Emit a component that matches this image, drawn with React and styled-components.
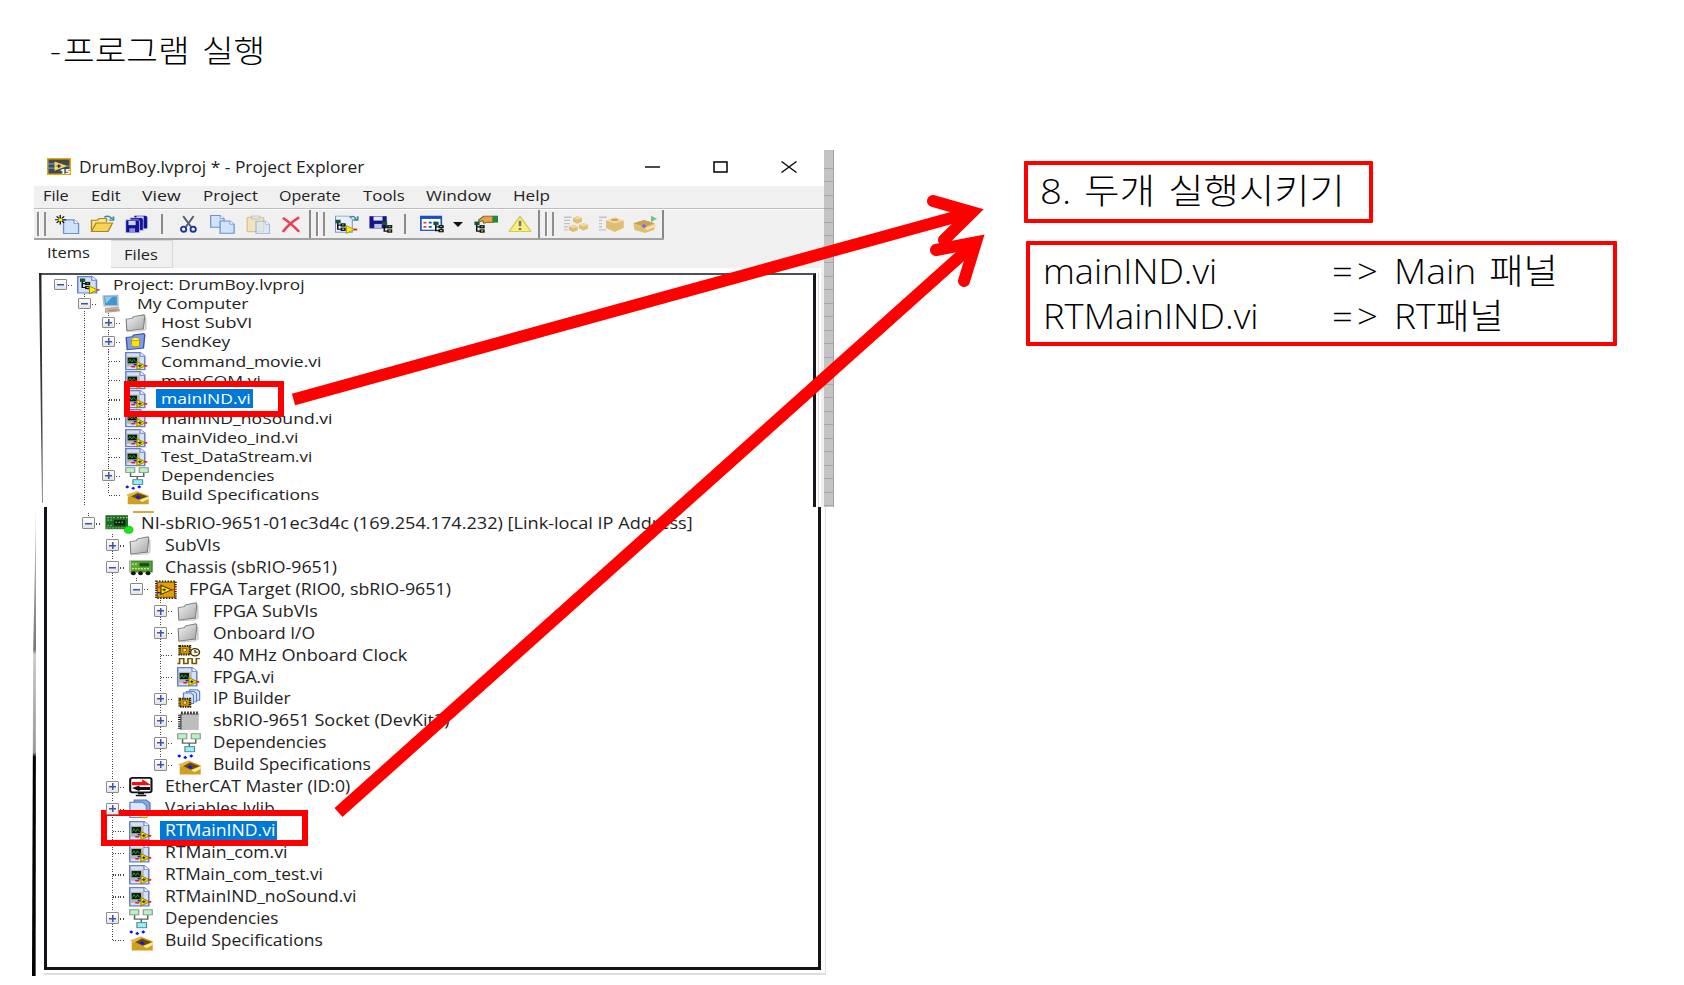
import React, { useLayoutEffect, useRef, useState } from "react";
import styled, { createGlobalStyle, css } from "styled-components";

const GlobalStyle = createGlobalStyle`
  * { box-sizing: border-box; }
  html, body { margin: 0; padding: 0; background: #fff; }
  body { overflow: hidden; }
`;

const uiFont = `"Open Sans", "Noto Sans", "Noto Sans CJK KR", sans-serif`;
const noteFont = `"Open Sans", "Noto Sans CJK KR", sans-serif`;
const red = "#ff0000";

/* ---------- text that is stretched to a set width ---------- */

const FitBox = styled.span`
  display: block;
  flex: none;
  width: ${(p) => p.$w}px;
  white-space: pre;
`;
const FitInner = styled.span`
  display: inline-block;
  transform-origin: 0 50%;
`;

function Fit({ w, children }) {
  const ref = useRef(null);
  const [scale, setScale] = useState(1);
  useLayoutEffect(() => {
    setScale(w / ref.current.offsetWidth);
  }, [w, children]);
  return (
    <FitBox $w={w}>
      <FitInner ref={ref} style={{ transform: `scaleX(${scale})` }}>
        {children}
      </FitInner>
    </FitBox>
  );
}

/* ---------- icons ---------- */

const IconSvg = styled.svg`
  display: block;
  flex: none;
  overflow: visible;
  width: ${(p) => p.$w}px;
  height: ${(p) => p.$h}px;
`;

const Page = ({ x = 0, y = 0 }) => (
  <>
    <path d={`M${x + 0.5} ${y + 0.5}h7l3 3v8.5h-10z`} fill="#cfe3fb" stroke="#6f8fd0" strokeWidth=".9" />
    <path d={`M${x + 7.5} ${y + 0.5}v3h3`} fill="#fff" stroke="#6f8fd0" strokeWidth=".7" />
  </>
);
const Hierarchy = ({ x = 0, y = 0 }) => (
  <>
    <path d={`M${x + 1.5} ${y + 2}v6h3M${x + 1.5} ${y + 4.5}h3`} fill="none" stroke="#111" />
    <rect x={x} y={y} width="3.4" height="3" fill="#153" />
    <rect x={x + 3.4} y={y + 3} width="3.4" height="2.8" fill="#111" />
    <rect x={x + 3.4} y={y + 6.6} width="3.4" height="2.8" fill="#111" />
    <rect x={x + 4.4} y={y + 3.8} width="1.4" height="1" fill="#3b6" />
    <rect x={x + 4.4} y={y + 7.4} width="1.4" height="1" fill="#dd3" />
  </>
);

const icons = {
  vi: (
    <>
      <path d="M.5.5h9.7l3 3.2v11.8H.5z" fill="#d5e1f8" stroke="#6a7fc8" />
      <path d="M10 .5v3.3h3.2" fill="#fff" stroke="#6a7fc8" strokeWidth=".8" />
      <rect x="1.2" y="4" width="8.6" height="9" fill="#b4b4b4" />
      <rect x="1.8" y="5" width="6.2" height="5" fill="#061a06" />
      <path d="M2.2 8.8l1.1-2.4 1.2 2.4 1.2-2.4 1.3 2.2" fill="none" stroke="#38b838" strokeWidth=".6" />
      <path d="M4.2 13h2.6" stroke="#e02020" strokeWidth="1.3" />
      <path d="M5.8 11.2h2.4" stroke="#2020e0" strokeWidth="1.3" />
      <path d="M8 8.800l5.600 3.400L8 15.600z" fill="#ffee00" stroke="#9a8600" strokeWidth=".8" />
      <path d="M8.700 12.200h2.400M9.900 11v2.400" stroke="#222" strokeWidth=".8" />
      <path d="M12.900 12.200h1.900" stroke="#e02020" strokeWidth="1.500" />
    </>
  ),
  project: (
    <>
      <path d="M.5.5h9.500l3 3.200v11.300H.5z" fill="#d5e1f8" stroke="#6a7fc8" />
      <path d="M9.800.5v3.300H13" fill="#fff" stroke="#6a7fc8" strokeWidth=".8" />
      <Hierarchy x={2} y={2.200} />
      <path d="M8.300 9l5.400 3.300-5.400 3.300z" fill="#ffee00" stroke="#9a8600" strokeWidth=".7" />
      <path d="M13.200 12.300h1.800" stroke="#e02020" strokeWidth="1.300" />
    </>
  ),
  computer: (
    <>
      <path d="M1.500 .8l9.500-.3.300 9H2.200z" fill="#3f97cf" stroke="#b5bcc4" strokeWidth="1.200" />
      <path d="M2.600 1.800l5-.2-4.300 6z" fill="#8ccdf0" />
      <path d="M3 11.800l8.500-.8 1 3-9.500 1.300z" fill="#c9b9a2" stroke="#8a94a5" strokeWidth=".6" />
      <path d="M5 13.800l6-.7" stroke="#e07a3a" />
    </>
  ),
  folder: (
    <>
      <path d="M1.300 15.300l10.500-.6 2-1.400V3" fill="none" stroke="#aaa" strokeWidth="1.200" opacity=".6" />
      <path d="M.8 4.600L4.800 3.800l1-1.500 6.800-1.600.6 1.200-.9 11.300L1.200 14.900z" fill="url(#folderGrey)" stroke="#777" strokeWidth=".7" />
    </>
  ),
  keyFolder: (
    <>
      <path d="M.8 4L4.800 3.200l1-1.500 6.800-1.100.6 1.200-.9 11.400L1.500 14.800z" fill="#7d9df0" stroke="#3a4fae" strokeWidth=".9" />
      <path d="M4.300 5.500v5c0 2.200 5.400 2.200 5.400 0v-5z" fill="#ffe400" stroke="#a08800" strokeWidth=".6" />
      <ellipse cx="7" cy="5.400" rx="2.700" ry="1.300" fill="#fff9a0" stroke="#a08800" strokeWidth=".6" />
    </>
  ),
  deps: (
    <>
      <path d="M3.700 5v3.400h8.800V5M8.200 8.400v3" fill="none" stroke="#5c6666" />
      <rect x=".5" y=".6" width="6" height="4.200" fill="#b9f3c4" stroke="#889a90" strokeWidth=".8" />
      <rect x="9.500" y=".6" width="6" height="4.200" fill="#b9f3c4" stroke="#889a90" strokeWidth=".8" />
      <rect x="5.300" y="11.200" width="6.400" height="4.200" fill="#8ef2f7" stroke="#5c8a90" strokeWidth=".8" />
    </>
  ),
  build: (
    <>
      <path d="M1.800 9.500V16H15.800V8.500L8.500 5z" fill="#cf9f22" />
      <path d="M3.500 8.800l5-2.600 6.500 3-5.500 3z" fill="#6b4a08" />
      <path d="M.6 7.800L8 4.400l1.500 1L3.200 9.800z" fill="#e3b844" />
      <path d="M9.500 12.400l6.300-3.200v2.300l-4.300 2.600z" fill="#fbe9a0" />
      <path d="M8.700 8.200l1.700 1.700-1.700 1.700L7 9.900z" fill="#1414f0" />
      <path d="M1.500-.6L2.900.8 1.500 2.200.1.800zM5.500.6l1.400 1.400-1.400 1.400L4.100 2zM9.500-.6L10.900.8 9.500 2.200 8.100.8z" fill="#1414f0" />
    </>
  ),
  rio: (
    <>
      <rect x=".3" y="1" width="15" height="11.500" fill="#1f6b22" />
      <path d="M1.500 3h5M1.500 5h4M1.500 9.500h4M1 11.500h14" stroke="#73b873" strokeDasharray="1.200 .7" />
      <path d="M6 5h7.500v4.500H6z" fill="#0a2a0a" />
      <path d="M7 6.800h6M8 3h7" stroke="#9ad39a" strokeDasharray="1 1" />
      <circle cx="15.800" cy="13" r="2.900" fill="#10f010" stroke="#0aa50a" strokeWidth=".5" />
    </>
  ),
  chassis: (
    <>
      <rect x=".6" y="2.500" width="14.800" height="9" fill="#58a832" stroke="#356b20" strokeWidth=".7" />
      <path d="M.8 2v9.500" stroke="#b9c0b0" strokeWidth="1.200" />
      <rect x="7" y="4" width="6.500" height="3" fill="#1e4f16" />
      <path d="M2 5h4M2 8.800h12" stroke="#c7ef9a" strokeDasharray="1.200 .8" />
      <circle cx="2.900" cy="12.600" r="1.600" fill="#111" />
      <circle cx="7.700" cy="12.600" r="1.600" fill="#111" />
      <circle cx="12.700" cy="12.600" r="1.600" fill="#111" />
    </>
  ),
  fpga: (
    <g transform="translate(1 0)">
      <rect x="1.100" y="1.100" width="13" height="13.800" fill="none" stroke="#2b1d00" strokeWidth="1.400" strokeDasharray="1 .9" />
      <rect x="1.800" y="1.800" width="11.600" height="12.400" fill="#e0a000" stroke="#5c4000" strokeWidth=".7" />
      <path d="M4.300 4.300l7 3.800-7 3.800z" fill="#ffee00" stroke="#443300" strokeWidth=".8" />
      <path d="M1.300 5.800h3M11.500 8.100h2.500" stroke="#e02020" />
      <path d="M1.300 10.400h3" stroke="#2020e0" />
      <path d="M5.200 8.100h2.400M6.400 7v2.200" stroke="#222" strokeWidth=".8" />
    </g>
  ),
  clock: (
    <>
      <rect x="1.700" y=".8" width="7" height="7" fill="#d59a00" stroke="#2b1d00" strokeWidth="1.600" strokeDasharray="1 .6" />
      <rect x="4" y="3" width="2.200" height="2.400" fill="#ffe680" stroke="#6b4a08" strokeWidth=".5" />
      <circle cx="12" cy="6" r="3" fill="#fff6d0" stroke="#3a3320" />
      <path d="M12 4.200V6h1.600" fill="none" stroke="#222" strokeWidth=".8" />
      <path d="M.3 15.200h1.400v-4h2.800v4h2.800v-4h2.800v4h2.800v-4h2.300" fill="none" stroke="#7a5200" strokeWidth="1.100" />
    </>
  ),
  ip: (
    <>
      <path d="M8.500.7h5l1.600 1.600v7H8.500z" fill="#d8e6fb" stroke="#5f7fc8" strokeWidth=".8" />
      <path d="M6.300 2h5L13 3.600v7H6.300z" fill="#d8e6fb" stroke="#5f7fc8" strokeWidth=".8" />
      <path d="M4.300 3.300h5L11 5v7H4.300z" fill="#d8e6fb" stroke="#5f7fc8" strokeWidth=".8" />
      <rect x="1.700" y="8" width="7" height="6.600" fill="#d59a00" stroke="#2b1d00" strokeWidth="1.600" strokeDasharray="1 .6" />
      <rect x="4.100" y="10" width="2.400" height="2.400" fill="#ffe680" stroke="#6b4a08" strokeWidth=".5" />
    </>
  ),
  socket: (
    <>
      <rect x="2.500" y="2.800" width="12" height="12.800" fill="#bdbdbd" />
      <path d="M2.800 1.400H14.600" stroke="#111" strokeWidth="2" strokeDasharray="1 1" />
      <path d="M1.600 3v12.500" stroke="#111" strokeWidth="1.800" strokeDasharray=".9 .9" />
      <path d="M2.600 15.500V2.600h12" fill="none" stroke="#333" strokeWidth=".7" />
    </>
  ),
  ethercat: (
    <>
      <rect x=".8" y=".8" width="14.200" height="11.800" rx="1.400" fill="#fff" stroke="#111" strokeWidth="1.400" />
      <path d="M4.500 15.200h7M6 13.600h4" stroke="#111" strokeWidth="1.300" />
      <path d="M2 4.200h6.800V1.900l5.400 4.200v.7H2z" fill="#f01010" />
      <path d="M14 8.200H7V6.900L2 9l5 2.800v-1.200h7z" fill="#111" />
    </>
  ),
  lib: (
    <>
      <path d="M3.500.8h8l2.500 2.500v10H3.500z" fill="#87a8e0" stroke="#5274bd" strokeWidth=".8" />
      <path d="M.6 2.800h8.500l2.500 2.600v9.800H.6z" fill="#d9e8fc" stroke="#6a8bd2" strokeWidth=".9" />
      <ellipse cx="10" cy="13.200" rx="3" ry="2.200" fill="#ffe65a" stroke="#b59b10" strokeWidth=".6" />
    </>
  ),
  labview: (
    <>
      <rect x="0" y="0" width="16" height="16" fill="#eba900" />
      <rect x="1" y="1.400" width="14" height="13.200" fill="#44484e" />
      <path d="M0 5.500h5M0 9.500h5M13 7.500h3" stroke="#5aa3dd" />
      <path d="M5 3.200l8.600 4.400L5 12z" fill="#f4d56c" />
      <path d="M6.400 7.600h3M7.900 6v3.200" stroke="#222" />
      <text x="8.600" y="14.600" fontFamily="Open Sans" fontWeight="800" fontSize="6" fill="#fff">15</text>
    </>
  ),
  newFile: (
    <>
      <g transform="translate(5.200 3.600)"><Page /></g>
      <path d="M3.500 0v8M0 4h7.500M1.100 1.200l5 5.400M6.100 1.200l-5 5.400" stroke="#111" strokeWidth=".9" />
      <rect x="2.400" y="2.800" width="2.400" height="2.400" fill="#ffee00" />
    </>
  ),
  open: (
    <>
      <path d="M1 14V4.600h4l1-1.400h5v3" fill="#fbe58a" stroke="#a8861c" strokeWidth=".9" />
      <path d="M1 14.600l3-7.400h11l-3 7.400z" fill="#f7d355" stroke="#a8861c" strokeWidth=".9" />
      <path d="M9.500 2c2-1.500 4-1 5 1.600M15.600 1.400v3.200h-3" fill="none" stroke="#2f8f9a" strokeWidth="1.200" />
    </>
  ),
  saveAll: (
    <>
      <path d="M6.500 .6h7.700l1.300 1v10.500h-9z" fill="#12129a" />
      <path d="M8 1.100h5v3H8z" fill="#cfd8f8" />
      <path d="M3.500 2.400h8.200l1 1v10.300H3.500z" fill="#12129a" stroke="#dfe4ff" strokeWidth=".5" />
      <path d="M.5 4.300h8.600l1 1v10.500H.5z" fill="#12129a" stroke="#dfe4ff" strokeWidth=".5" />
      <path d="M2.400 5.200h5v3.800h-5z" fill="#cfd8f8" />
      <path d="M3 11.800h4v3.700H3z" fill="#8c94d8" />
    </>
  ),
  cut: (
    <>
      <path d="M3 1l7.400 9.600M12.800 1L5.500 10.600" stroke="#56606c" strokeWidth="1.800" />
      <ellipse cx="3.400" cy="12.600" rx="2.500" ry="2.300" fill="none" stroke="#17349a" strokeWidth="1.700" />
      <ellipse cx="12.400" cy="12.600" rx="2.500" ry="2.300" fill="none" stroke="#17349a" strokeWidth="1.700" />
    </>
  ),
  copy: (
    <>
      <g transform="translate(0 0) scale(.86)"><Page /></g>
      <g transform="translate(6 4.600) scale(.9)"><Page /></g>
    </>
  ),
  paste: (
    <g opacity=".75">
      <rect x=".8" y="2" width="11" height="12" rx="1" fill="#f0e3ac" stroke="#cbb96e" strokeWidth=".9" />
      <rect x="3.600" y=".8" width="5.400" height="2.600" fill="#dcdcdc" stroke="#aaa" strokeWidth=".5" />
      <g transform="translate(6.200 4.800) scale(.9)" opacity=".7"><Page /></g>
    </g>
  ),
  del: <path d="M1.500 1.800c4 3 8.500 7.600 13 13M14.500 1.200C10 4.600 4.800 9.500 1.500 15" fill="none" stroke="#e8405a" strokeWidth="2.200" />,
  projOpen: (
    <>
      <path d="M1 1h9l2.200 2.400V14.500H1z" fill="#e9f0fc" stroke="#7d95cc" strokeWidth=".7" />
      <Hierarchy x={1} y={4} />
      <path d="M8.300 9l5.200 3.200-5.200 3.300z" fill="#ffee00" stroke="#9a8600" strokeWidth=".6" />
      <path d="M13 12.200h2.500" stroke="#e02020" strokeWidth="1.500" />
      <path d="M10.500 2c2-1.500 3.500-.8 4 1.600M15.800 1v3.200h-3" fill="none" stroke="#2f8f9a" strokeWidth="1.200" />
    </>
  ),
  projSave: (
    <>
      <path d="M.3 1h11.500v10.300H.3z" fill="#14148a" />
      <path d="M3 1.300h6v3.400H3z" fill="#e4e9fc" />
      <path d="M3.500 7.500h5V11h-5z" fill="#b9c0f0" />
      <Hierarchy x={8.700} y={5.500} />
    </>
  ),
  grid: (
    <>
      <rect x=".6" y="1.200" width="13.600" height="12.400" fill="#fff" stroke="#1a4fc4" strokeWidth="1.100" />
      <path d="M.3 2.200h14.200" stroke="#1a4fc4" strokeWidth="2.600" />
      <path d="M2.300 6.700h2M2.300 10.500h2" stroke="#e04030" strokeWidth="1.600" />
      <path d="M5.800 6.700h2M9 6.700h2M5.800 10.500h2" stroke="#1a4fc4" strokeWidth="1.600" />
      <Hierarchy x={9} y={6} />
    </>
  ),
  hand: (
    <>
      <Hierarchy x={0.3} y={5.5} />
      <path d="M3 4.200L6.500 1h6.200v5.200L9.500 6l-3 1-.6-2-2.500.5z" fill="#e0a44a" stroke="#7a4c10" strokeWidth=".7" />
      <rect x="12.500" y=".6" width="3.500" height="5.800" fill="#1f8a3a" />
    </>
  ),
  warn: (
    <>
      <path d="M8 1.200L15.300 14.700H.7z" fill="#f9ef7e" stroke="#d8c850" strokeLinejoin="round" />
      <path d="M8 5v5M8 11.500v1.800" stroke="#77787c" strokeWidth="1.700" />
    </>
  ),
  cubes: (
    <>
      <path d="M0 2h5M0 4.800h4M0 7.600h4M0 10.400h2.500M0 13.200h2.500" stroke="#c2c2c2" strokeWidth="1.200" />
      <path d="M6 2.600l3-1.700 3 1.700V6L9 7.700 6 6zM3.200 10.300l3-1.700 3 1.700v3.200l-3 1.700-3-1.700zM10 8.800l3-1.700 3 1.700V12l-3 1.700L10 12z" fill="#dfbd72" />
      <path d="M6 2.600l3 1.500 3-1.500L9 .9zM3.200 10.300l3 1.500 3-1.500-3-1.700zM10 8.800l3 1.500 3-1.500-3-1.700z" fill="#efd9a4" />
    </>
  ),
  package: (
    <>
      <path d="M0 2h5M0 4.800h2M0 7.600h2M0 10.400h2M0 13.200h4.500" stroke="#c2c2c2" strokeWidth="1.200" />
      <path d="M4.500 5L10 2.200 15.800 5v6.500L10 15l-5.500-3.500z" fill="#dfbd72" />
      <path d="M4.500 5L10 7.600 15.800 5 10 2.200z" fill="#efd9a0" />
      <path d="M8 3.400h4v1.800H8z" fill="#c9a04e" />
    </>
  ),
  deploy: (
    <>
      <path d="M.3 7l7-2.800 7 2.800v5.500L8 15.200l-7-2.500z" fill="#e0bf72" />
      <path d="M.3 7l7-2.800 7 2.800L8 9.800z" fill="#c79f55" />
      <path d="M8 11l7.500-3.500v2L9.500 12.600z" fill="#f5e3b4" />
      <path d="M7.300 7.600l1.700 1.800-1.700 1.800-1.700-1.800z" fill="#6f6fe8" />
      <path d="M12 .6l4 2.500-4 2.700z" fill="#6fc486" />
    </>
  ),
};

const Icon = ({ name, w, h }) => (
  <IconSvg viewBox="0 0 16 16" preserveAspectRatio="none" $w={w} $h={h}>
    {icons[name]}
  </IconSvg>
);

const Defs = styled.svg`
  position: absolute;
  width: 0;
  height: 0;
`;

/* ---------- slide ---------- */

const Slide = styled.main`
  position: relative;
  width: 1684px;
  height: 985px;
  overflow: hidden;
  background: #fff;
  color: #000;
`;
const SlideHeader = styled.header`
  height: 150px;
  padding: 27px 0 0 50px;
`;
const SlideTitle = styled.h1`
  display: flex;
  gap: 2px;
  margin: 0;
  font: 300 31px/46px ${noteFont};
  word-spacing: 3px;
`;
const SlideBody = styled.div`
  display: flex;
  align-items: flex-start;
`;
const Shots = styled.section`
  width: 802px;
  margin-left: 32px;
`;

/* ---------- explorer window ---------- */

const WindowRow = styled.div`
  display: flex;
  height: 357px;
  margin-left: 2px;
`;
const Explorer = styled.div`
  display: flex;
  flex-direction: column;
  width: 790px;
  font: 400 15px/20px ${uiFont};
  color: #222;
`;
const DesktopStrip = styled.div`
  width: 10px;
  border-right: 1px solid #a2a2a2;
  background: repeating-linear-gradient(#c4c4c4 0 12.5px, #a8a8a8 12.5px 13.5px);
  background-position-y: 5px;
`;
const TitleBar = styled.div`
  display: flex;
  align-items: center;
  height: 36px;
  padding: 0 27px 3px 13px;
  font-size: 15.5px;
`;
const TitleText = styled.div`
  margin-left: 8px;
  flex: 1;
`;
const Controls = styled.div`
  display: flex;
  align-items: center;
  gap: 53px;
`;
const MenuBar = styled.div`
  display: flex;
  align-items: center;
  gap: 21.5px;
  height: 22px;
  padding: 0 0 5px 9px;
  background: #f0f0f0;
  white-space: nowrap;
`;
const ToolArea = styled.div`
  height: 32px;
  border-top: 1px solid #bdbdbd;
  background: #f0f0f0;
  box-shadow: inset 0 1px #fff;
`;
const ToolStrip = styled.div`
  display: flex;
  align-items: center;
  width: 630px;
  height: 31px;
  padding: 1px 0 0 3px;
  border-bottom: 2px solid #a3a3a3;
`;
const Tool = styled.div`
  flex: none;
  margin-left: ${(p) => p.$gap}px;
`;
const Grip = styled.div`
  flex: none;
  width: 9px;
  height: 24px;
  margin-left: ${(p) => p.$gap || 0}px;
  border: solid #8e8e8e;
  border-width: 0 2px;
  background: linear-gradient(90deg, #fff 1px, #f0f0f0 1px);
`;
const Divider = styled.div`
  flex: none;
  width: 2px;
  height: ${(p) => (p.$full ? 28 : 20)}px;
  margin-left: ${(p) => p.$gap}px;
  background: #8a8a8a;
`;
const Caret = styled.div`
  margin-left: 9px;
  border: solid transparent;
  border-width: 5px 5px 0;
  border-top-color: #111;
`;
const Tabs = styled.div`
  display: flex;
  height: 28px;
  background: #f0f0f0;
`;
const Tab = styled.div`
  width: ${(p) => (p.$active ? 77 : 62)}px;
  padding: ${(p) => (p.$active ? "2px 0 0 13px" : "3px 0 0 13px")};
  background: ${(p) => (p.$active ? "#fff" : "#f0f0f0")};
  ${(p) => !p.$active && css`
    border: solid #d6d6d6;
    border-width: 1px 1px 1px 0;
  `}
`;
const TopPane = styled.div`
  display: flex;
  flex: 1;
  padding: 5px 2px 0 5px;
  border-right: 3px solid #efefef;
`;
const SkewedEdge = styled.div`
  width: 4px;
  height: 230px;
  background: linear-gradient(#222, #445 70%, #999);
  clip-path: polygon(0 0, 60% 0, 100% 100%, 75% 100%);
`;
const TopTree = styled.div`
  flex: 1;
  margin-left: -3px;
  padding-left: 8.5px;
  border: solid #14181d;
  border-width: 2.5px 3px 0 0;
  border-top-color: #4a5158;
`;
const PaneGap = styled.div`
  width: 3px;
  border-right: 1px solid #ddd;
`;

/* ---------- second capture ---------- */

const LowerRow = styled.div`
  display: flex;
  height: 470px;
  font: 400 16.2px/22px ${uiFont};
  color: #222;
`;
const OuterEdge = styled.div`
  width: 4px;
  height: 466px;
  margin: 3px 8px 0 0;
  background: linear-gradient(#ccc, #777 30%, #ccc 31%, #999 52%, #000 53%);
  clip-path: polygon(100% 0, 100% 30%, 90% 100%, 0 100%, 30% 30%);
`;
const LowerFrame = styled.div`
  width: 782px;
  height: 468px;
  border: solid #dedede;
  border-width: 0 1px 2px 0;
`;
const LowerTree = styled.div`
  width: 777px;
  height: 463px;
  padding-left: 29.5px;
  border: 3px solid #11151a;
  border-top: 0;
`;
const CutRow = styled.div`
  height: 5.5px;
  padding: 4px 0 0 56px;
`;
const CutIcon = styled.div`
  width: 21px;
  height: 1.5px;
  background: #d8a840;
`;

/* ---------- tree rows ---------- */

const Row = styled.div`
  display: flex;
  align-items: center;
  height: ${(p) => p.$h}px;
`;
const dots = (dir) => `repeating-linear-gradient(${dir}, #444 0 1px, transparent 1px 2.4px)`;
const Guide = styled.div`
  position: relative;
  display: flex;
  align-items: center;
  justify-content: center;
  flex: none;
  width: 24px;
  height: 100%;
  &::before {
    content: "";
    position: absolute;
    left: 11.5px;
    top: 0;
    bottom: ${(p) => (p.$to === "mid" ? "50%" : 0)};
    width: 1.3px;
    background: ${(p) => (p.$line ? dots("180deg") : "none")};
  }
  &::after {
    content: "";
    position: absolute;
    left: 12px;
    top: 50%;
    width: 11px;
    height: 1.2px;
    background: ${(p) => (p.$tee ? dots("90deg") : "none")};
  }
`;
const Expander = styled.div`
  position: relative;
  z-index: 1;
  width: 13px;
  height: ${(p) => p.$h}px;
  border: 1px solid #8b8b8b;
  border-radius: 1px;
  background:
    linear-gradient(#3c55a5, #3c55a5) center / 7px 1.5px no-repeat,
    linear-gradient(#3c55a5, #3c55a5) center / ${(p) => (p.$open ? "0 0" : "1.5px 7px")} no-repeat,
    linear-gradient(#fff, #e4e4e4);
`;
const IconCell = styled.div`
  flex: none;
  width: 40px;
  padding-left: 4.5px;
`;
const Label = styled.div`
  padding: 0 2px 0 ${(p) => (p.$selected ? 4.5 : 0)}px;
  margin: -1px 0 0 ${(p) => (p.$selected ? -4.5 : 0)}px;
  line-height: ${(p) => (p.$selected ? 19 : 18)}px;
  color: ${(p) => (p.$selected ? "#fff" : "#222")};
  background: ${(p) => (p.$selected ? "#0078d7" : "transparent")};
`;

function TreeRow({ h, guides = [], node, icon, text, w, selected, last, stub }) {
  return (
    <Row $h={h}>
      {guides.map((on, i) => <Guide key={i} $line={on} />)}
      <Guide $line={stub || node !== "root"} $to={stub || last ? "mid" : "end"} $tee>
        {node !== "leaf" && <Expander $h={h > 20 ? 12 : 11} $open={node !== "plus"} />}
      </Guide>
      <IconCell><Icon name={icon} w={24} h={h - (h > 20 ? 2.5 : 1)} /></IconCell>
      <Label $selected={selected}><Fit w={w}>{text}</Fit></Label>
    </Row>
  );
}

const g1 = [false];
const g2 = [false, true];
const upperRows = [
  { node: "root", icon: "project", text: "Project: DrumBoy.lvproj", w: 191 },
  { guides: g1, node: "minus", icon: "computer", text: "My Computer", w: 112 },
  { guides: g2, node: "plus", icon: "folder", text: "Host SubVI", w: 91 },
  { guides: g2, node: "plus", icon: "keyFolder", text: "SendKey", w: 69 },
  { guides: g2, node: "leaf", icon: "vi", text: "Command_movie.vi", w: 160 },
  { guides: g2, node: "leaf", icon: "vi", text: "mainCOM.vi", w: 100 },
  { guides: g2, node: "leaf", icon: "vi", text: "mainIND.vi", w: 90, selected: true },
  { guides: g2, node: "leaf", icon: "vi", text: "mainIND_noSound.vi", w: 171 },
  { guides: g2, node: "leaf", icon: "vi", text: "mainVideo_ind.vi", w: 138 },
  { guides: g2, node: "leaf", icon: "vi", text: "Test_DataStream.vi", w: 151 },
  { guides: g2, node: "plus", icon: "deps", text: "Dependencies", w: 113 },
  { guides: g2, node: "leaf", icon: "build", text: "Build Specifications", w: 158, last: true },
];

const l2 = [false];
const l4 = [false, true, false];
const lowerRows = [
  { node: "minus", stub: true, icon: "rio", text: "NI-sbRIO-9651-01ec3d4c (169.254.174.232) [Link-local IP Address]", w: 552 },
  { guides: l2, node: "plus", icon: "folder", text: "SubVIs", w: 56 },
  { guides: l2, node: "minus", icon: "chassis", text: "Chassis (sbRIO-9651)", w: 172 },
  { guides: [false, true], node: "minus", stub: true, icon: "fpga", text: "FPGA Target (RIO0, sbRIO-9651)", w: 262 },
  { guides: l4, node: "plus", icon: "folder", text: "FPGA SubVIs", w: 105 },
  { guides: l4, node: "plus", icon: "folder", text: "Onboard I/O", w: 102 },
  { guides: l4, node: "leaf", icon: "clock", text: "40 MHz Onboard Clock", w: 194 },
  { guides: l4, node: "leaf", icon: "vi", text: "FPGA.vi", w: 62 },
  { guides: l4, node: "plus", icon: "ip", text: "IP Builder", w: 78 },
  { guides: l4, node: "plus", icon: "socket", text: "sbRIO-9651 Socket (DevKit2)", w: 237 },
  { guides: l4, node: "plus", icon: "deps", text: "Dependencies", w: 113 },
  { guides: l4, node: "plus", icon: "build", text: "Build Specifications", w: 158, last: true },
  { guides: l2, node: "plus", icon: "ethercat", text: "EtherCAT Master (ID:0)", w: 185 },
  { guides: l2, node: "plus", icon: "lib", text: "Variables.lvlib", w: 110 },
  { guides: l2, node: "leaf", icon: "vi", text: "RTMainIND.vi", w: 110, selected: true },
  { guides: l2, node: "leaf", icon: "vi", text: "RTMain_com.vi", w: 122 },
  { guides: l2, node: "leaf", icon: "vi", text: "RTMain_com_test.vi", w: 158 },
  { guides: l2, node: "leaf", icon: "vi", text: "RTMainIND_noSound.vi", w: 191 },
  { guides: l2, node: "plus", icon: "deps", text: "Dependencies", w: 113 },
  { guides: l2, node: "leaf", icon: "build", text: "Build Specifications", w: 158, last: true },
];

const menus = [
  ["File", 26], ["Edit", 30], ["View", 39], ["Project", 55],
  ["Operate", 62], ["Tools", 41.5], ["Window", 65.5], ["Help", 36.5],
];

/* ---------- notes and annotations ---------- */

const Notes = styled.aside`
  display: flex;
  flex-direction: column;
  gap: 18px;
  margin: 11px 0 0 190px;
`;
const NoteBox = styled.div`
  width: ${(p) => p.$w}px;
  height: ${(p) => p.$h}px;
  margin-left: ${(p) => p.$indent || 0}px;
  padding: ${(p) => p.$pad};
  border: 4px solid ${red};
  border-radius: 1px;
  font: 300 35px/44.5px ${noteFont};
  word-spacing: 3px;
`;
const NoteLine = styled.div`
  display: grid;
  grid-template-columns: 289px 62px auto;
  height: 44.5px;
`;
const Becomes = styled.span`
  letter-spacing: 4px;
`;
const Highlight = styled.div`
  position: absolute;
  left: ${(p) => p.$x}px;
  top: ${(p) => p.$y}px;
  width: ${(p) => p.$w}px;
  height: ${(p) => p.$h}px;
  border: 6px solid ${red};
`;
const ArrowLayer = styled.svg`
  position: absolute;
  inset: 0;
  width: 1684px;
  height: 985px;
  fill: none;
  stroke: ${red};
  stroke-width: 12px;
  stroke-miterlimit: 8;
`;

function Arrow({ from, tip, a, b }) {
  return (
    <g>
      <path d={`M${from}L${tip}`} />
      <path d={`M${a}L${tip}L${b}`} strokeLinecap="round" />
    </g>
  );
}

export default function App() {
  return (
    <Slide>
      <GlobalStyle />
      <Defs aria-hidden="true">
        <linearGradient id="folderGrey" x1="0" y1="0" x2="1" y2="1">
          <stop offset="0" stopColor="#f4f4f4" />
          <stop offset="1" stopColor="#a4a4a4" />
        </linearGradient>
      </Defs>
      <SlideHeader>
        <SlideTitle><Fit w={11}>-</Fit><Fit w={202}>프로그램 실행</Fit></SlideTitle>
      </SlideHeader>
      <SlideBody>
        <Shots>
          <WindowRow>
            <Explorer>
              <TitleBar>
                <Icon name="labview" w={24} h={17} />
                <TitleText><Fit w={285}>DrumBoy.lvproj * - Project Explorer</Fit></TitleText>
                <Controls>
                  <svg width="15" height="12"><path d="M0 6h15" stroke="#111" strokeWidth="1.5" /></svg>
                  <svg width="15" height="12"><rect x="1" y="1" width="13" height="10" fill="none" stroke="#111" strokeWidth="1.6" /></svg>
                  <svg width="16" height="12"><path d="M.5.5l15 11M15.5.5L.5 11.5" stroke="#111" strokeWidth="1.4" /></svg>
                </Controls>
              </TitleBar>
              <MenuBar>
                {menus.map(([name, w]) => <Fit key={name} w={w}>{name}</Fit>)}
              </MenuBar>
              <ToolArea>
                <ToolStrip>
                  <Grip />
                  <Tool $gap={9}><Icon name="newFile" w={24} h={19} /></Tool>
                  <Tool $gap={11}><Icon name="open" w={24} h={18} /></Tool>
                  <Tool $gap={10.5}><Icon name="saveAll" w={23} h={18} /></Tool>
                  <Divider $gap={13.5} />
                  <Tool $gap={16.5}><Icon name="cut" w={17} h={18} /></Tool>
                  <Tool $gap={13}><Icon name="copy" w={25} h={19} /></Tool>
                  <Tool $gap={11.5}><Icon name="paste" w={24} h={19} /></Tool>
                  <Tool $gap={11}><Icon name="del" w={20} h={17} /></Tool>
                  <Divider $gap={8} $full />
                  <Grip $gap={5} />
                  <Tool $gap={9}><Icon name="projOpen" w={24} h={19} /></Tool>
                  <Tool $gap={10.5}><Icon name="projSave" w={24} h={19} /></Tool>
                  <Divider $gap={11.5} />
                  <Tool $gap={14}><Icon name="grid" w={24} h={18} /></Tool>
                  <Caret />
                  <Tool $gap={10.5}><Icon name="hand" w={24} h={19} /></Tool>
                  <Tool $gap={10.5}><Icon name="warn" w={24} h={18} /></Tool>
                  <Divider $gap={6} $full />
                  <Grip $gap={5} />
                  <Tool $gap={10}><Icon name="cubes" w={24} h={18} /></Tool>
                  <Tool $gap={10.5}><Icon name="package" w={25} h={18} /></Tool>
                  <Tool $gap={9.5}><Icon name="deploy" w={24} h={19} /></Tool>
                  <Divider $gap={5} $full />
                </ToolStrip>
              </ToolArea>
              <Tabs>
                <Tab $active><Fit w={43}>Items</Fit></Tab>
                <Tab><Fit w={34}>Files</Fit></Tab>
              </Tabs>
              <TopPane>
                <SkewedEdge />
                <TopTree>
                  {upperRows.map((r) => <TreeRow key={r.text} h={19.13} {...r} />)}
                </TopTree>
                <PaneGap />
              </TopPane>
            </Explorer>
            <DesktopStrip />
          </WindowRow>
          <LowerRow>
            <OuterEdge />
            <LowerFrame>
              <LowerTree>
                <CutRow><CutIcon /></CutRow>
                {lowerRows.map((r, i) => <TreeRow key={i} h={21.95} {...r} />)}
              </LowerTree>
            </LowerFrame>
          </LowerRow>
        </Shots>
        <Notes>
          <NoteBox $w={349} $h={62} $pad="4px 0 0 12px">
            <Fit w={305}>8. 두개 실행시키기</Fit>
          </NoteBox>
          <NoteBox $w={591} $h={105} $indent={2} $pad="4px 0 0 13px">
            <NoteLine>
              <Fit w={174}>mainIND.vi</Fit><Fit w={50}><Becomes>=&gt;</Becomes></Fit><Fit w={164}>Main 패널</Fit>
            </NoteLine>
            <NoteLine>
              <Fit w={216}>RTMainIND.vi</Fit><Fit w={50}><Becomes>=&gt;</Becomes></Fit><Fit w={110}>RT패널</Fit>
            </NoteLine>
          </NoteBox>
        </Notes>
      </SlideBody>
      <Highlight $x={124} $y={381} $w={160} $h={36} />
      <Highlight $x={101} $y={810} $w={207} $h={36} />
      <ArrowLayer>
        <Arrow from="293.5 399.5" tip="972.2 212.2" a="933 201" b="944 240" />
        <Arrow from="338.5 812.5" tip="975.9 242.3" a="936 250" b="964 281" />
      </ArrowLayer>
    </Slide>
  );
}
